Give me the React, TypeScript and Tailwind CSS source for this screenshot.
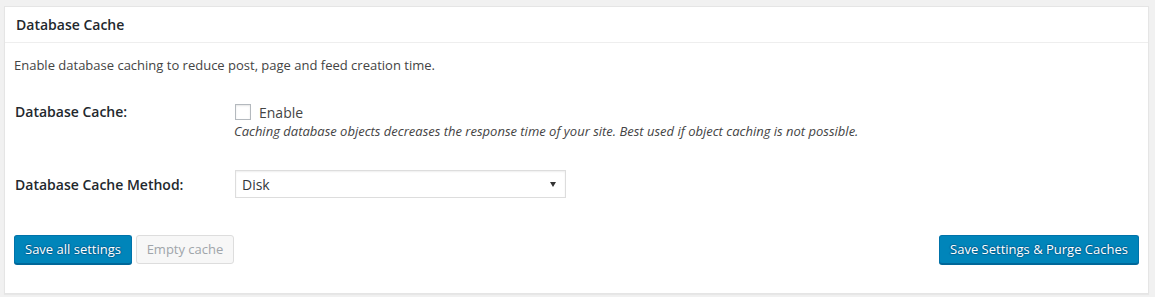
import React, { useState } from "react";

export default function App() {
  const [enabled, setEnabled] = useState(false);
  const [method, setMethod] = useState("Disk");

  return (
    <div className="w-[1155px] h-[297px] bg-[#f1f1f1] pt-[6px] pl-[4px] pr-[6px] font-['Open_Sans',sans-serif] text-[#444]">
      <div className="h-[288px] bg-white border border-[#e5e5e5] shadow-[0_1px_1px_rgba(0,0,0,0.04)] flex flex-col">
        {/* Postbox header */}
        <div className="h-[36px] px-[11px] flex items-center border-b border-[#eee] text-[14px] font-semibold text-[#23282d]">
          Database Cache
        </div>

        {/* Inside */}
        <div className="flex-1 flex flex-col px-[9px] pt-[12px]">
          <p className="text-[13px] leading-[20px]">
            Enable database caching to reduce post, page and feed creation time.
          </p>

          {/* Enable row */}
          <div className="flex mt-[27px]">
            <div className="w-[220px] text-[14px] leading-[20px] font-semibold text-[#23282d] pl-[1px]">
              Database Cache:
            </div>
            <div className="flex flex-col">
              <label className="flex items-center h-[20px] text-[14px] text-[#444] cursor-pointer">
                <input
                  type="checkbox"
                  checked={enabled}
                  onChange={(e) => setEnabled(e.target.checked)}
                  className="appearance-none w-[16px] h-[16px] border border-[#b4b9be] bg-white shadow-[inset_0_1px_2px_rgba(0,0,0,0.1)] mr-[8px] ml-[1px]"
                />
                Enable
              </label>
              <span className="text-[13px] leading-[18px] italic text-[#444]">
                Caching database objects decreases the response time of your site. Best used if object caching is not possible.
              </span>
            </div>
          </div>

          {/* Method row */}
          <div className="flex items-center mt-[30px]">
            <div className="w-[221px] text-[14px] leading-[20px] font-semibold text-[#23282d] pl-[1px] pt-[2px]">
              Database Cache Method:
            </div>
            <div className="relative w-[331px] h-[28px]">
              <select
                value={method}
                onChange={(e) => setMethod(e.target.value)}
                className="appearance-none w-full h-full border border-[#ddd] bg-white shadow-[inset_0_1px_2px_rgba(0,0,0,0.07)] pl-[6px] text-[14px] text-[#32373c] outline-none"
              >
                <option>Disk</option>
                <option>Opcode: Alternative PHP Cache (APC / APCu)</option>
                <option>Memcached</option>
                <option>Redis</option>
              </select>
              <svg
                className="absolute right-[10px] top-[12px] pointer-events-none"
                width="6"
                height="5"
                viewBox="0 0 6 5"
              >
                <path d="M0 0 L6 0 L3 5 Z" fill="#333" />
              </svg>
            </div>
          </div>

          {/* Buttons */}
          <div className="flex items-start justify-between mt-[37px]">
            <div className="flex gap-[4px]">
              <button className="h-[29px] px-[10px] text-[13px] rounded-[3px] bg-[#0085ba] border border-[#0073aa] border-b-[#006799] shadow-[0_1px_0_#006799] text-white [text-shadow:0_-1px_1px_#006799,1px_0_1px_#006799,0_1px_1px_#006799,-1px_0_1px_#006799]">
                Save all settings
              </button>
              <button
                disabled
                className="h-[29px] w-[98px] text-[13px] rounded-[3px] bg-[#f7f7f7] border border-[#ddd] text-[#a0a5aa]"
              >
                Empty cache
              </button>
            </div>
            <button className="h-[29px] w-[200px] text-[13px] rounded-[3px] bg-[#0085ba] border border-[#0073aa] border-b-[#006799] shadow-[0_1px_0_#006799] text-white [text-shadow:0_-1px_1px_#006799,1px_0_1px_#006799,0_1px_1px_#006799,-1px_0_1px_#006799]">
              Save Settings &amp; Purge Caches
            </button>
          </div>
        </div>
      </div>
    </div>
  );
}
